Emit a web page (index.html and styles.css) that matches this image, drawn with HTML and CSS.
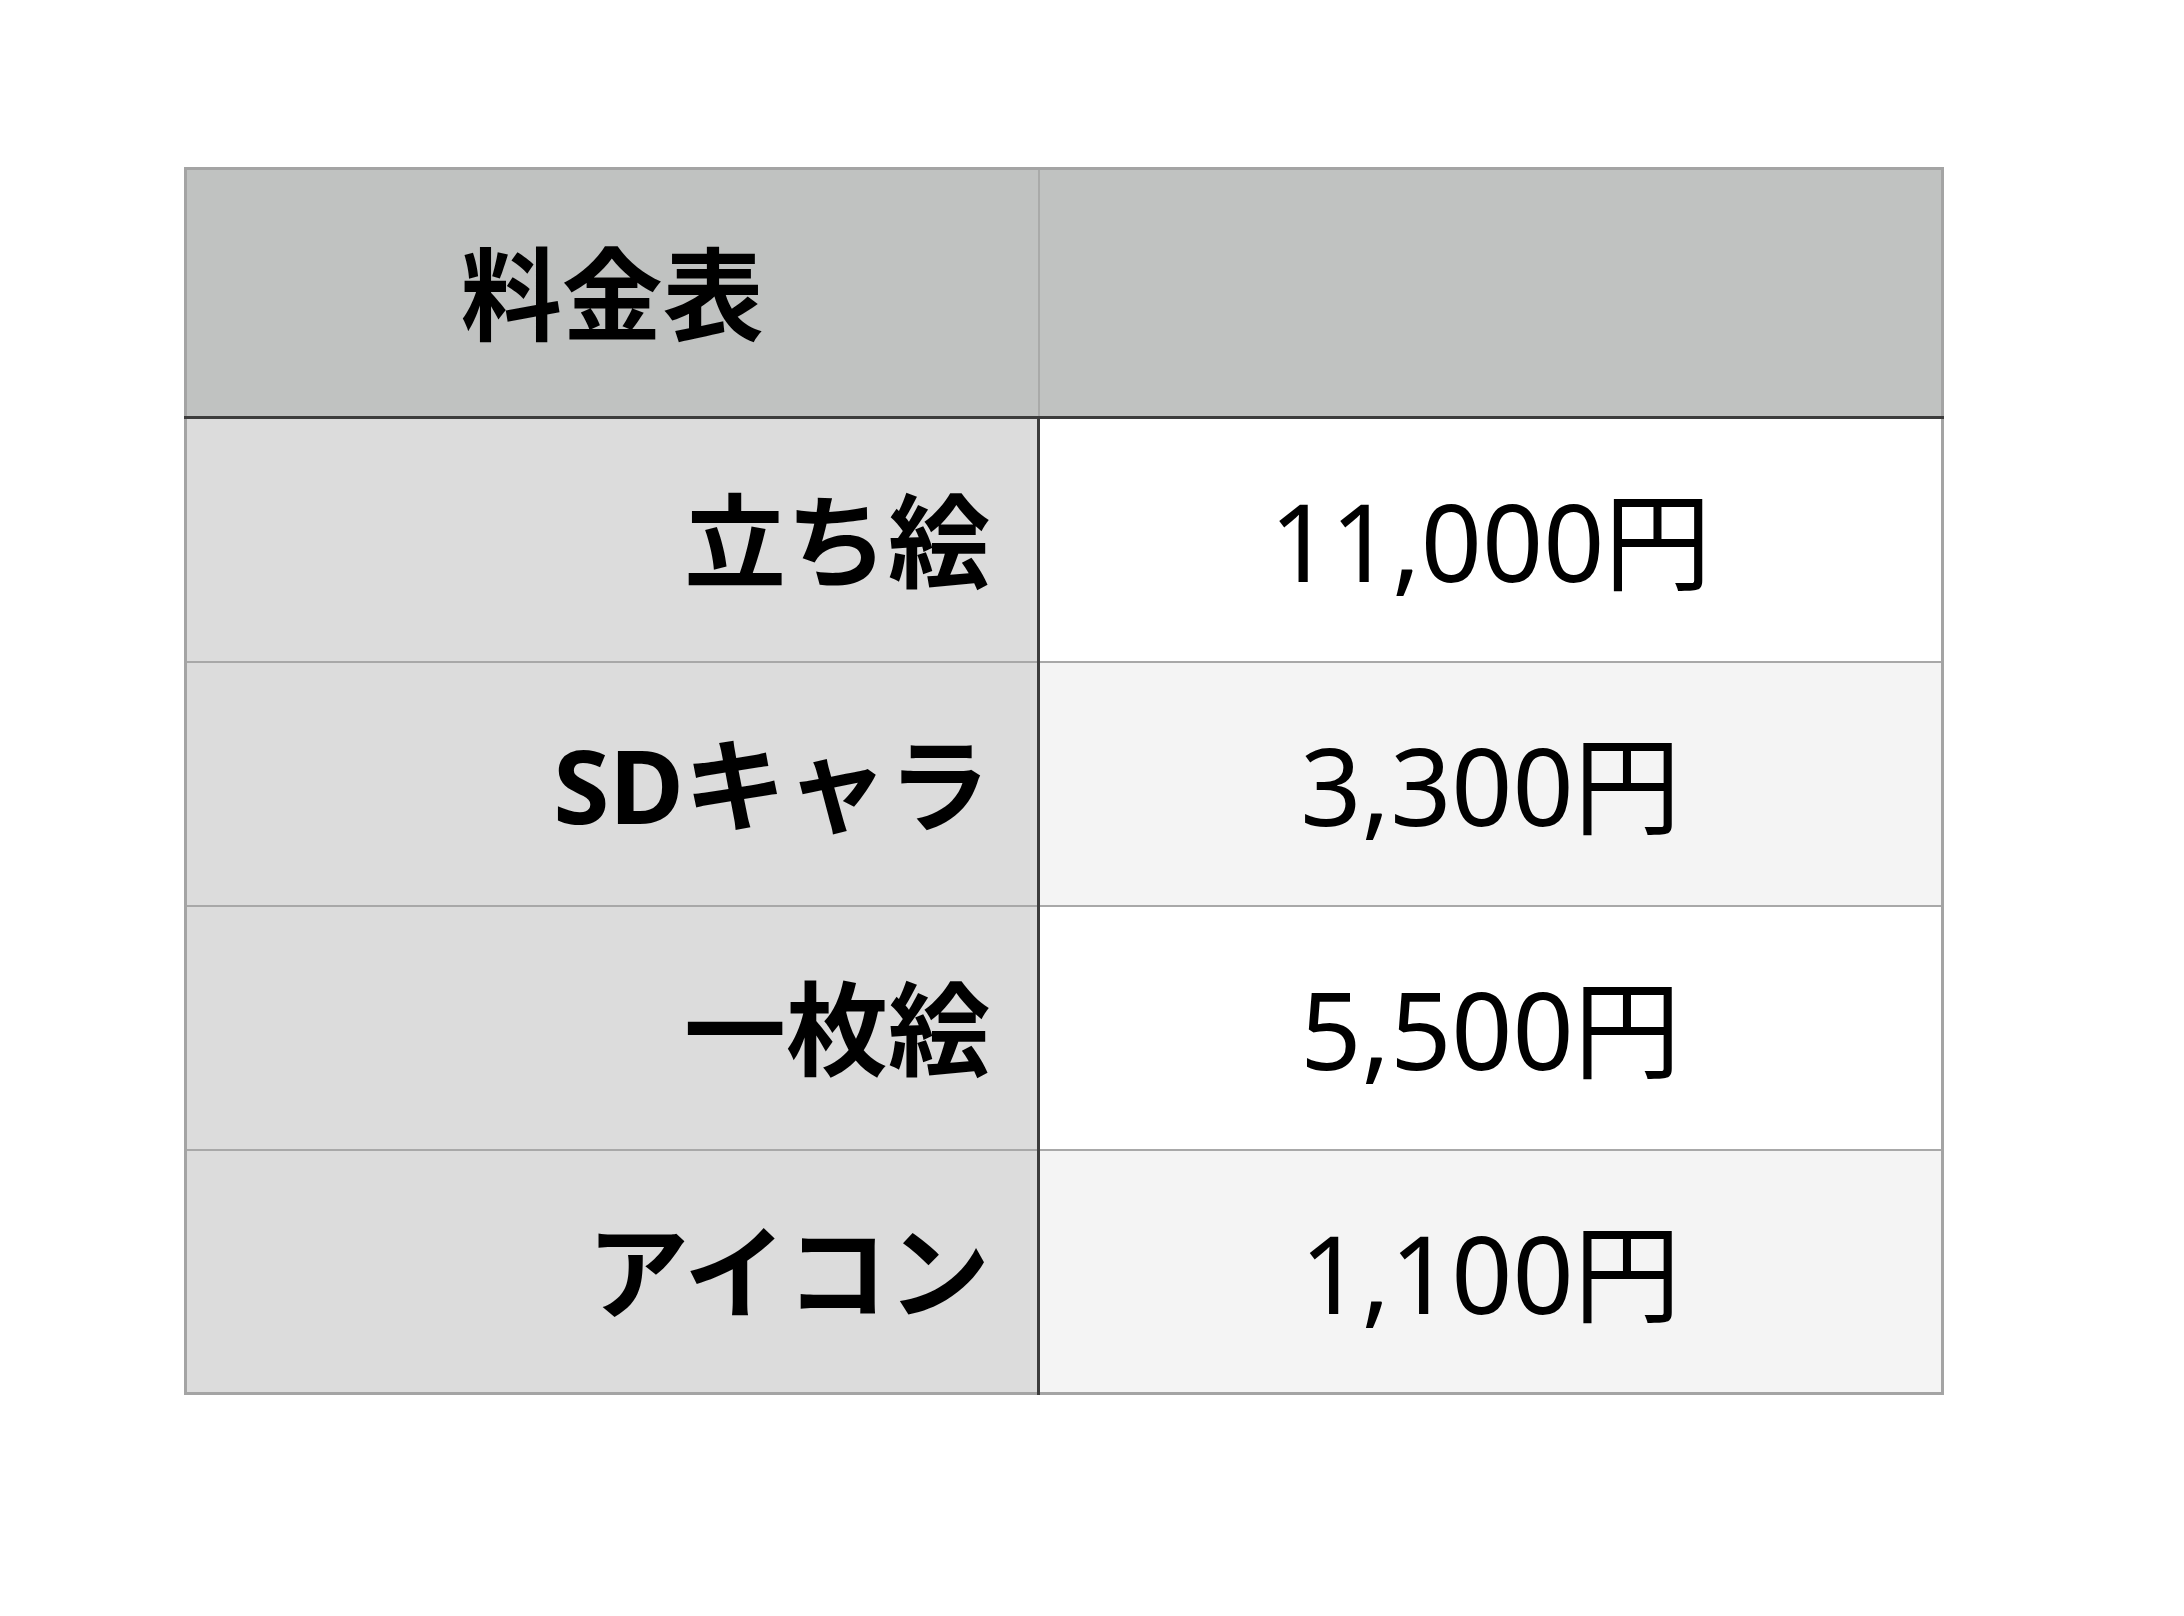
FILE: index.html
```html
<!DOCTYPE html>
<html lang="ja">
<head>
<meta charset="utf-8">
<title>料金表</title>
<link rel="stylesheet" href="styles.css">
</head>
<body>
<div class="page">
  <table class="price">
    <colgroup><col class="c-label"><col class="c-value"></colgroup>
    <thead>
      <tr><th class="head-label">料金表</th><th class="head-empty"></th></tr>
    </thead>
    <tbody>
      <tr class="odd"><th class="label">立ち絵</th><td class="value">11,000円</td></tr>
      <tr class="even"><th class="label">SDキャラ</th><td class="value">3,300円</td></tr>
      <tr class="odd"><th class="label">一枚絵</th><td class="value">5,500円</td></tr>
      <tr class="even"><th class="label">アイコン</th><td class="value">1,100円</td></tr>
    </tbody>
  </table>
</div>
</body>
</html>
```
FILE: styles.css
```css
html, body {
  margin: 0;
  padding: 0;
  background: #ffffff;
}
.page {
  padding: 167px 0 0 184px;
  font-family: "Noto Sans", "Noto Sans CJK JP", sans-serif;
  color: #000;
}
.price {
  border-collapse: collapse;
  table-layout: fixed;
  width: 1757px;
  border: 3px solid #a4a4a4;
}
.c-label { width: 853px; }
.c-value { width: 904px; }
.price thead tr {
  height: 249px;
  background: #c0c2c1;
  border-bottom: 3px solid #3c3c3c;
}
.head-label {
  font-size: 101px;
  font-weight: 700;
  text-align: center;
  padding: 0 0 8px 0;
  border-right: 2px solid #a9aaa9;
}
.head-empty { padding: 0; }
.price tbody tr {
  height: 244px;
  border-bottom: 2px solid #a8a8a8;
}
.label {
  background: #dcdcdc;
  font-size: 102px;
  font-weight: 700;
  text-align: right;
  padding: 0 47px 8px 0;
  border-right: 3px solid #3c3c3c;
}
.value {
  font-size: 107px;
  font-weight: 400;
  text-align: center;
  padding: 0 0 8px 0;
}
.odd .value { background: #ffffff; }
.even .value { background: #f4f4f4; }
```
